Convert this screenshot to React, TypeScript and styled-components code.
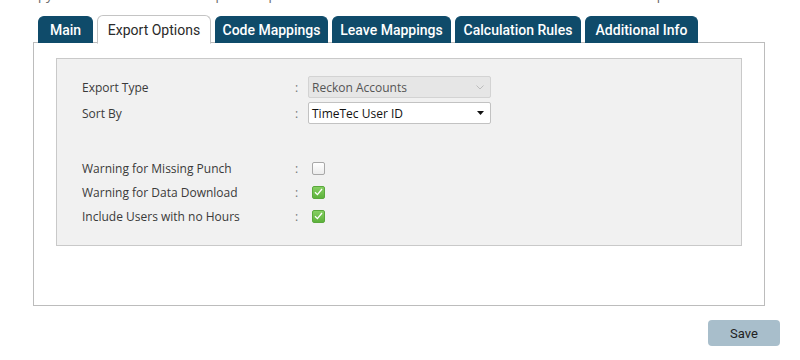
import styled, { createGlobalStyle } from "styled-components";

const GlobalStyle = createGlobalStyle`
  body {
    margin: 0;
    background: #ffffff;
    font-family: "Open Sans", "Noto Sans", Arial, sans-serif;
    color: #333333;
  }
`;

const Page = styled.div`
  display: flow-root;
  width: 800px;
  height: 360px;
  overflow: hidden;
  box-sizing: border-box;
  padding: 0 20px 0 33px;
`;

const Intro = styled.p`
  margin: -13px 0 12px -11px;
  height: 16px;
  font-size: 13px;
  line-height: 16px;
  color: #666666;
  white-space: nowrap;
`;

const TabRow = styled.div`
  display: flex;
  gap: 4px;
  margin: 0 0 0 5px;
  height: 28px;
  align-items: flex-end;
  position: relative;
  z-index: 1;
`;

const Tab = styled.div<{ $active?: boolean; $w: number }>`
  box-sizing: border-box;
  height: ${(p) => (p.$active ? "29px" : "27px")};
  width: ${(p) => p.$w}px;
  display: flex;
  align-items: center;
  justify-content: center;
  font-family: "Roboto", "Open Sans", sans-serif;
  font-size: 14px;
  font-weight: ${(p) => (p.$active ? 400 : 500)};
  color: ${(p) => (p.$active ? "#2a2a2a" : "#ffffff")};
  background: ${(p) => (p.$active ? "#ffffff" : "#0f4b6a")};
  border: 1px solid ${(p) => (p.$active ? "#c4c4c4" : "#0f4b6a")};
  border-bottom: ${(p) => (p.$active ? "1px solid #ffffff" : "none")};
  border-radius: 6px 6px 0 0;
  margin-bottom: ${(p) => (p.$active ? "-1px" : "0")};
`;

const Panel = styled.div`
  box-sizing: border-box;
  width: 732px;
  height: 264px;
  border: 1px solid #bcbcbc;
  padding: 15px 22px 0 22px;
  margin-top: -1px;
`;

const Section = styled.div`
  box-sizing: border-box;
  height: 188px;
  background: #f1f1f1;
  border: 1px solid #c9c9c9;
  padding: 15px 25px 0 25px;
`;

const Grid = styled.div`
  display: grid;
  grid-template-columns: 213px 13px 183px;
`;

const Spacer = styled.div`
  grid-column: 1 / -1;
  height: 30px;
`;

const Label = styled.div<{ $h: number }>`
  height: ${(p) => p.$h}px;
  display: flex;
  align-items: center;
  font-size: 12px;
  color: #3a3a3a;
`;

const Colon = styled(Label)`
  color: #777777;
`;

const Field = styled.div<{ $h: number }>`
  height: ${(p) => p.$h}px;
  display: flex;
  align-items: center;
`;

const Select = styled.div<{ $disabled?: boolean }>`
  box-sizing: border-box;
  width: 183px;
  height: 22px;
  display: flex;
  align-items: center;
  justify-content: space-between;
  padding: 0 6px 0 3px;
  font-size: 12px;
  color: ${(p) => (p.$disabled ? "#555555" : "#111111")};
  background: ${(p) => (p.$disabled ? "#e6e6e6" : "#ffffff")};
  border: 1px solid ${(p) => (p.$disabled ? "#d3d3d3" : "#c2c2c2")};
  border-radius: 2px;
`;

const Check = styled.div<{ $on?: boolean }>`
  box-sizing: border-box;
  width: 13px;
  height: 13px;
  margin-left: 4px;
  border-radius: 2px;
  border: 1px solid ${(p) => (p.$on ? "#5aa83c" : "#a8a8a8")};
  background: ${(p) =>
    p.$on ? "linear-gradient(#86cf63, #5db23b)" : "linear-gradient(#ffffff, #ececec)"};
  display: flex;
  align-items: center;
  justify-content: center;
`;

const Footer = styled.div`
  display: flex;
  justify-content: flex-end;
  padding-top: 14px;
`;

const SaveButton = styled.button`
  width: 72px;
  height: 26px;
  border: none;
  border-radius: 4px;
  background: #a8becb;
  color: #222222;
  font-family: "Roboto", "Open Sans", sans-serif;
  font-size: 13px;
  padding: 0;
`;

const tabs = [
  { name: "Main", w: 55 },
  { name: "Export Options", w: 114, active: true },
  { name: "Code Mappings", w: 113 },
  { name: "Leave Mappings", w: 119 },
  { name: "Calculation Rules", w: 126 },
  { name: "Additional Info", w: 113 },
];

const checks = [
  { label: "Warning for Missing Punch", on: false },
  { label: "Warning for Data Download", on: true },
  { label: "Include Users with no Hours", on: true },
];

function Tick() {
  return (
    <svg width="9" height="8" viewBox="0 0 9 8">
      <path d="M1 4.2 L3.4 6.6 L8 1" fill="none" stroke="#ffffff" strokeWidth="1.3" />
    </svg>
  );
}

export default function App() {
  return (
    <>
      <GlobalStyle />
      <Page>
        <Intro>
          Copy the details below to the export template in the header of the columns that are listed in the file to export
        </Intro>
        <TabRow>
          {tabs.map((t) => (
            <Tab key={t.name} $active={t.active} $w={t.w}>
              {t.name}
            </Tab>
          ))}
        </TabRow>
        <Panel>
          <Section>
            <Grid>
              <Label $h={26}>Export Type</Label>
              <Colon $h={26}>:</Colon>
              <Field $h={26}>
                <Select $disabled>
                  Reckon Accounts
                  <svg width="8" height="5" viewBox="0 0 8 5">
                    <path d="M0.5 0.5 L4 4 L7.5 0.5" fill="none" stroke="#bdbdbd" strokeWidth="1" />
                  </svg>
                </Select>
              </Field>
              <Label $h={26}>Sort By</Label>
              <Colon $h={26}>:</Colon>
              <Field $h={26}>
                <Select>
                  TimeTec User ID
                  <svg width="7" height="4" viewBox="0 0 7 4">
                    <path d="M0 0 L7 0 L3.5 4 Z" fill="#111111" />
                  </svg>
                </Select>
              </Field>
              <Spacer />
              {checks.map((c) => (
                <>
                  <Label key={c.label} $h={24}>
                    {c.label}
                  </Label>
                  <Colon $h={24}>:</Colon>
                  <Field $h={24}>
                    <Check $on={c.on}>{c.on && <Tick />}</Check>
                  </Field>
                </>
              ))}
            </Grid>
          </Section>
        </Panel>
        <Footer>
          <SaveButton>Save</SaveButton>
        </Footer>
      </Page>
    </>
  );
}
